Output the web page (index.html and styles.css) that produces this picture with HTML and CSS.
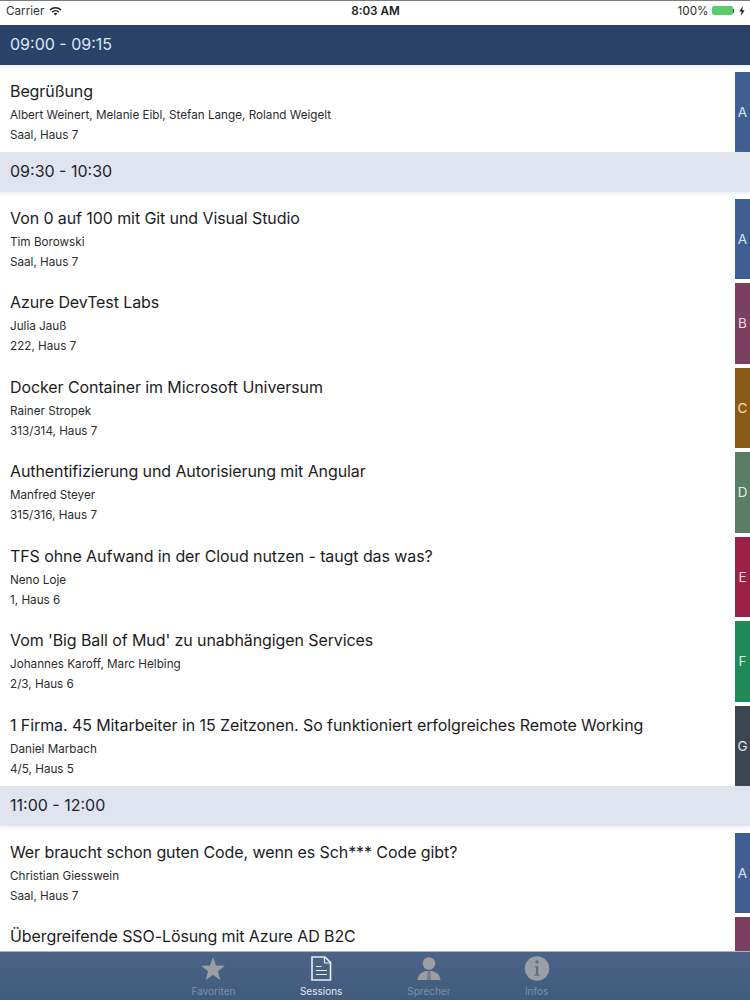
FILE: index.html
```html
<!DOCTYPE html>
<html lang="de">

<head>
    <meta charset="UTF-8">
    <meta name="viewport" content="width=device-width, initial-scale=1.0">
    <title>Sessions</title>
    <link rel="stylesheet" href="styles.css">
</head>

<body>
    <div class="app">
        <div class="status-bar">
            <div class="status-left">
                <span>Carrier</span>
                <svg class="wifi" width="13" height="10" viewBox="0 0 13 10">
                    <path d="M0.5 3.4 A8.5 8.5 0 0 1 12.5 3.4 L11.3 4.6 A6.8 6.8 0 0 0 1.7 4.6 Z" />
                    <path d="M2.6 5.5 A5.5 5.5 0 0 1 10.4 5.5 L9.2 6.7 A3.8 3.8 0 0 0 3.8 6.7 Z" />
                    <path d="M4.7 7.6 A2.6 2.6 0 0 1 8.3 7.6 L6.5 9.6 Z" />
                </svg>
            </div>
            <div class="status-time">8:03 AM</div>
            <div class="status-right">
                <span>100%</span>
                <div class="battery"></div>
                <div class="battery-tip"></div>
                <svg class="bolt" width="6" height="10" viewBox="0 0 6 10">
                    <path d="M3.8 0 L0.4 5.6 H2.6 L2 10 L5.6 4.2 H3.3 Z" fill="#222" />
                </svg>
            </div>
        </div>

        <div class="list">
            <div class="slot-header current">09:00 - 09:15</div>
            <div class="slot">
                <div class="session">
                    <div class="session-text">
                        <div class="session-title">Begrüßung</div>
                        <div class="session-info">Albert Weinert, Melanie Eibl, Stefan Lange, Roland Weigelt</div>
                        <div class="session-info">Saal, Haus 7</div>
                    </div>
                    <div class="track track-a">A</div>
                </div>
            </div>

            <div class="slot-header">09:30 - 10:30</div>
            <div class="slot">
                <div class="session">
                    <div class="session-text">
                        <div class="session-title">Von 0 auf 100 mit Git und Visual Studio</div>
                        <div class="session-info">Tim Borowski</div>
                        <div class="session-info">Saal, Haus 7</div>
                    </div>
                    <div class="track track-a">A</div>
                </div>
                <div class="session">
                    <div class="session-text">
                        <div class="session-title">Azure DevTest Labs</div>
                        <div class="session-info">Julia Jauß</div>
                        <div class="session-info">222, Haus 7</div>
                    </div>
                    <div class="track track-b">B</div>
                </div>
                <div class="session">
                    <div class="session-text">
                        <div class="session-title">Docker Container im Microsoft Universum</div>
                        <div class="session-info">Rainer Stropek</div>
                        <div class="session-info">313/314, Haus 7</div>
                    </div>
                    <div class="track track-c">C</div>
                </div>
                <div class="session">
                    <div class="session-text">
                        <div class="session-title">Authentifizierung und Autorisierung mit Angular</div>
                        <div class="session-info">Manfred Steyer</div>
                        <div class="session-info">315/316, Haus 7</div>
                    </div>
                    <div class="track track-d">D</div>
                </div>
                <div class="session">
                    <div class="session-text">
                        <div class="session-title">TFS ohne Aufwand in der Cloud nutzen - taugt das was?</div>
                        <div class="session-info">Neno Loje</div>
                        <div class="session-info">1, Haus 6</div>
                    </div>
                    <div class="track track-e">E</div>
                </div>
                <div class="session">
                    <div class="session-text">
                        <div class="session-title">Vom 'Big Ball of Mud' zu unabhängigen Services</div>
                        <div class="session-info">Johannes Karoff, Marc Helbing</div>
                        <div class="session-info">2/3, Haus 6</div>
                    </div>
                    <div class="track track-f">F</div>
                </div>
                <div class="session">
                    <div class="session-text">
                        <div class="session-title">1 Firma. 45 Mitarbeiter in 15 Zeitzonen. So funktioniert erfolgreiches Remote Working</div>
                        <div class="session-info">Daniel Marbach</div>
                        <div class="session-info">4/5, Haus 5</div>
                    </div>
                    <div class="track track-g">G</div>
                </div>
            </div>

            <div class="slot-header">11:00 - 12:00</div>
            <div class="slot">
                <div class="session">
                    <div class="session-text">
                        <div class="session-title">Wer braucht schon guten Code, wenn es Sch*** Code gibt?</div>
                        <div class="session-info">Christian Giesswein</div>
                        <div class="session-info">Saal, Haus 7</div>
                    </div>
                    <div class="track track-a">A</div>
                </div>
                <div class="session">
                    <div class="session-text">
                        <div class="session-title">Übergreifende SSO-Lösung mit Azure AD B2C</div>
                    </div>
                    <div class="track track-b"></div>
                </div>
            </div>
        </div>

        <div class="tab-bar">
            <div class="tab">
                <svg width="26" height="26" viewBox="0 0 26 26">
                    <path class="icon-fill" d="M13 1 L16 9.600 L25 9.800 L17.900 15.300 L20.400 24 L13 18.900 L5.600 24 L8.100 15.300 L1 9.800 L10 9.600 Z" />
                </svg>
                <span>Favoriten</span>
            </div>
            <div class="tab active">
                <svg width="26" height="26" viewBox="0 0 26 26">
                    <path class="icon-line" d="M4 1 H17 L22.500 6.500 V24 H4 Z" />
                    <path class="icon-line thin" d="M16.500 1 V7 H22.500 M8 10.500 H13.500 M8 14.500 H19 M8 18.500 H19" />
                </svg>
                <span>Sessions</span>
            </div>
            <div class="tab">
                <svg width="26" height="26" viewBox="0 0 26 26">
                    <circle class="icon-fill" cx="13" cy="7.500" r="6.300" />
                    <path class="icon-fill" d="M1.500 24 C2 19 5 16.300 10.500 15 H15.500 C21 16.300 24 19 24.500 24 Z" />
                    <path class="icon-cut" d="M11.800 15.500 H14.200 L14.800 24 H11.200 Z" />
                    <path class="icon-fill" d="M12.600 17 H13.400 V24 H12.600 Z" />
                </svg>
                <span>Sprecher</span>
            </div>
            <div class="tab">
                <svg width="26" height="26" viewBox="0 0 26 26">
                    <circle class="icon-fill" cx="13" cy="12.500" r="12.200" />
                    <circle class="icon-cut" cx="13" cy="6" r="1.700" />
                    <path class="icon-cut" d="M10.800 10 H14.200 V18.600 H15.600 V19.800 H10.600 V18.600 H12 V11.200 H10.800 Z" />
                </svg>
                <span>Infos</span>
            </div>
        </div>
    </div>
</body>

</html>
```

FILE: styles.css
```css
* {
    margin: 0;
    padding: 0;
    box-sizing: border-box;
}

body {
    font-family: Inter, 'Liberation Sans', sans-serif;
    background: #fff;
    color: #1c1c1e;
}

.app {
    width: 750px;
    height: 1000px;
    display: flex;
    flex-direction: column;
    overflow: hidden;
}

.status-bar {
    height: 25px;
    flex: none;
    display: grid;
    grid-template-columns: 1fr auto 1fr;
    align-items: center;
    padding: 0 5px 5px 6px;
    border-top: 1px solid #7d7d7d;
    font-size: 11.700px;
    color: #333;
}

.status-left {
    display: flex;
    align-items: center;
    gap: 5px;
}

.wifi {
    fill: #222;
}

.status-time {
    font-weight: 600;
    color: #222;
}

.status-right {
    display: flex;
    align-items: center;
    justify-content: flex-end;
}

.battery {
    width: 21px;
    height: 9px;
    margin-left: 3px;
    border-radius: 2px;
    background: #5bcc6b;
}

.battery-tip {
    width: 1.500px;
    height: 4px;
    background: #444;
}

.bolt {
    margin-left: 5px;
}

.list {
    flex: 1;
    min-height: 0;
    overflow: hidden;
}

.slot-header {
    position: relative;
    height: 39.500px;
    display: flex;
    align-items: center;
    padding: 0 0 1px 10px;
    font-size: 16px;
    background: #e0e4ee;
    color: #1c2430;
    box-shadow: 0 2px 3px rgba(224, 228, 238, 0.6);
}

.slot-header.current {
    background: #2a4268;
    color: #dbe8f6;
}

.slot {
    padding-top: 7px;
    display: flex;
    flex-direction: column;
    gap: 4px;
    background: #fff;
}

.session {
    height: 80.500px;
    flex: none;
    display: flex;
}

.session-text {
    flex: 1;
    padding: 9px 0 0 10px;
}

.session-title {
    font-size: 16px;
    letter-spacing: -0.090px;
    line-height: 20px;
    margin-bottom: 4px;
    white-space: nowrap;
}

.session-info {
    font-size: 11.700px;
    line-height: 20px;
    color: #2c2c2e;
}

.track {
    width: 15px;
    display: flex;
    align-items: center;
    justify-content: center;
    font-size: 13.500px;
}

.track-a {
    background: #3f5f93;
    color: #dce6f5;
}

.track-b {
    background: #7b3f62;
    color: #f2d8e6;
}

.track-c {
    background: #8a5a14;
    color: #f0e0c4;
}

.track-d {
    background: #5a7d66;
    color: #e2efe6;
}

.track-e {
    background: #9c2148;
    color: #f5d5e0;
}

.track-f {
    background: #1f8a58;
    color: #d8f2e5;
}

.track-g {
    background: #3d4650;
    color: #dfe4ea;
}

.tab-bar {
    height: 49px;
    flex: none;
    display: flex;
    justify-content: center;
    background: linear-gradient(#4a6386, #415b7d);
    border-top: 1px solid #aab6c4;
}

.tab {
    width: 107.700px;
    display: flex;
    flex-direction: column;
    align-items: center;
    padding-top: 4px;
    gap: 3px;
    font-size: 10px;
    line-height: 12px;
    color: #7f90a6;
}

.tab.active {
    color: #e4ebf3;
}

.icon-fill {
    fill: #9a9ea5;
}

.icon-cut {
    fill: #666d78;
}

.icon-line {
    fill: none;
    stroke: #e8eef5;
    stroke-width: 1.600;
}

.icon-line.thin {
    stroke-width: 1.200;
}
```
